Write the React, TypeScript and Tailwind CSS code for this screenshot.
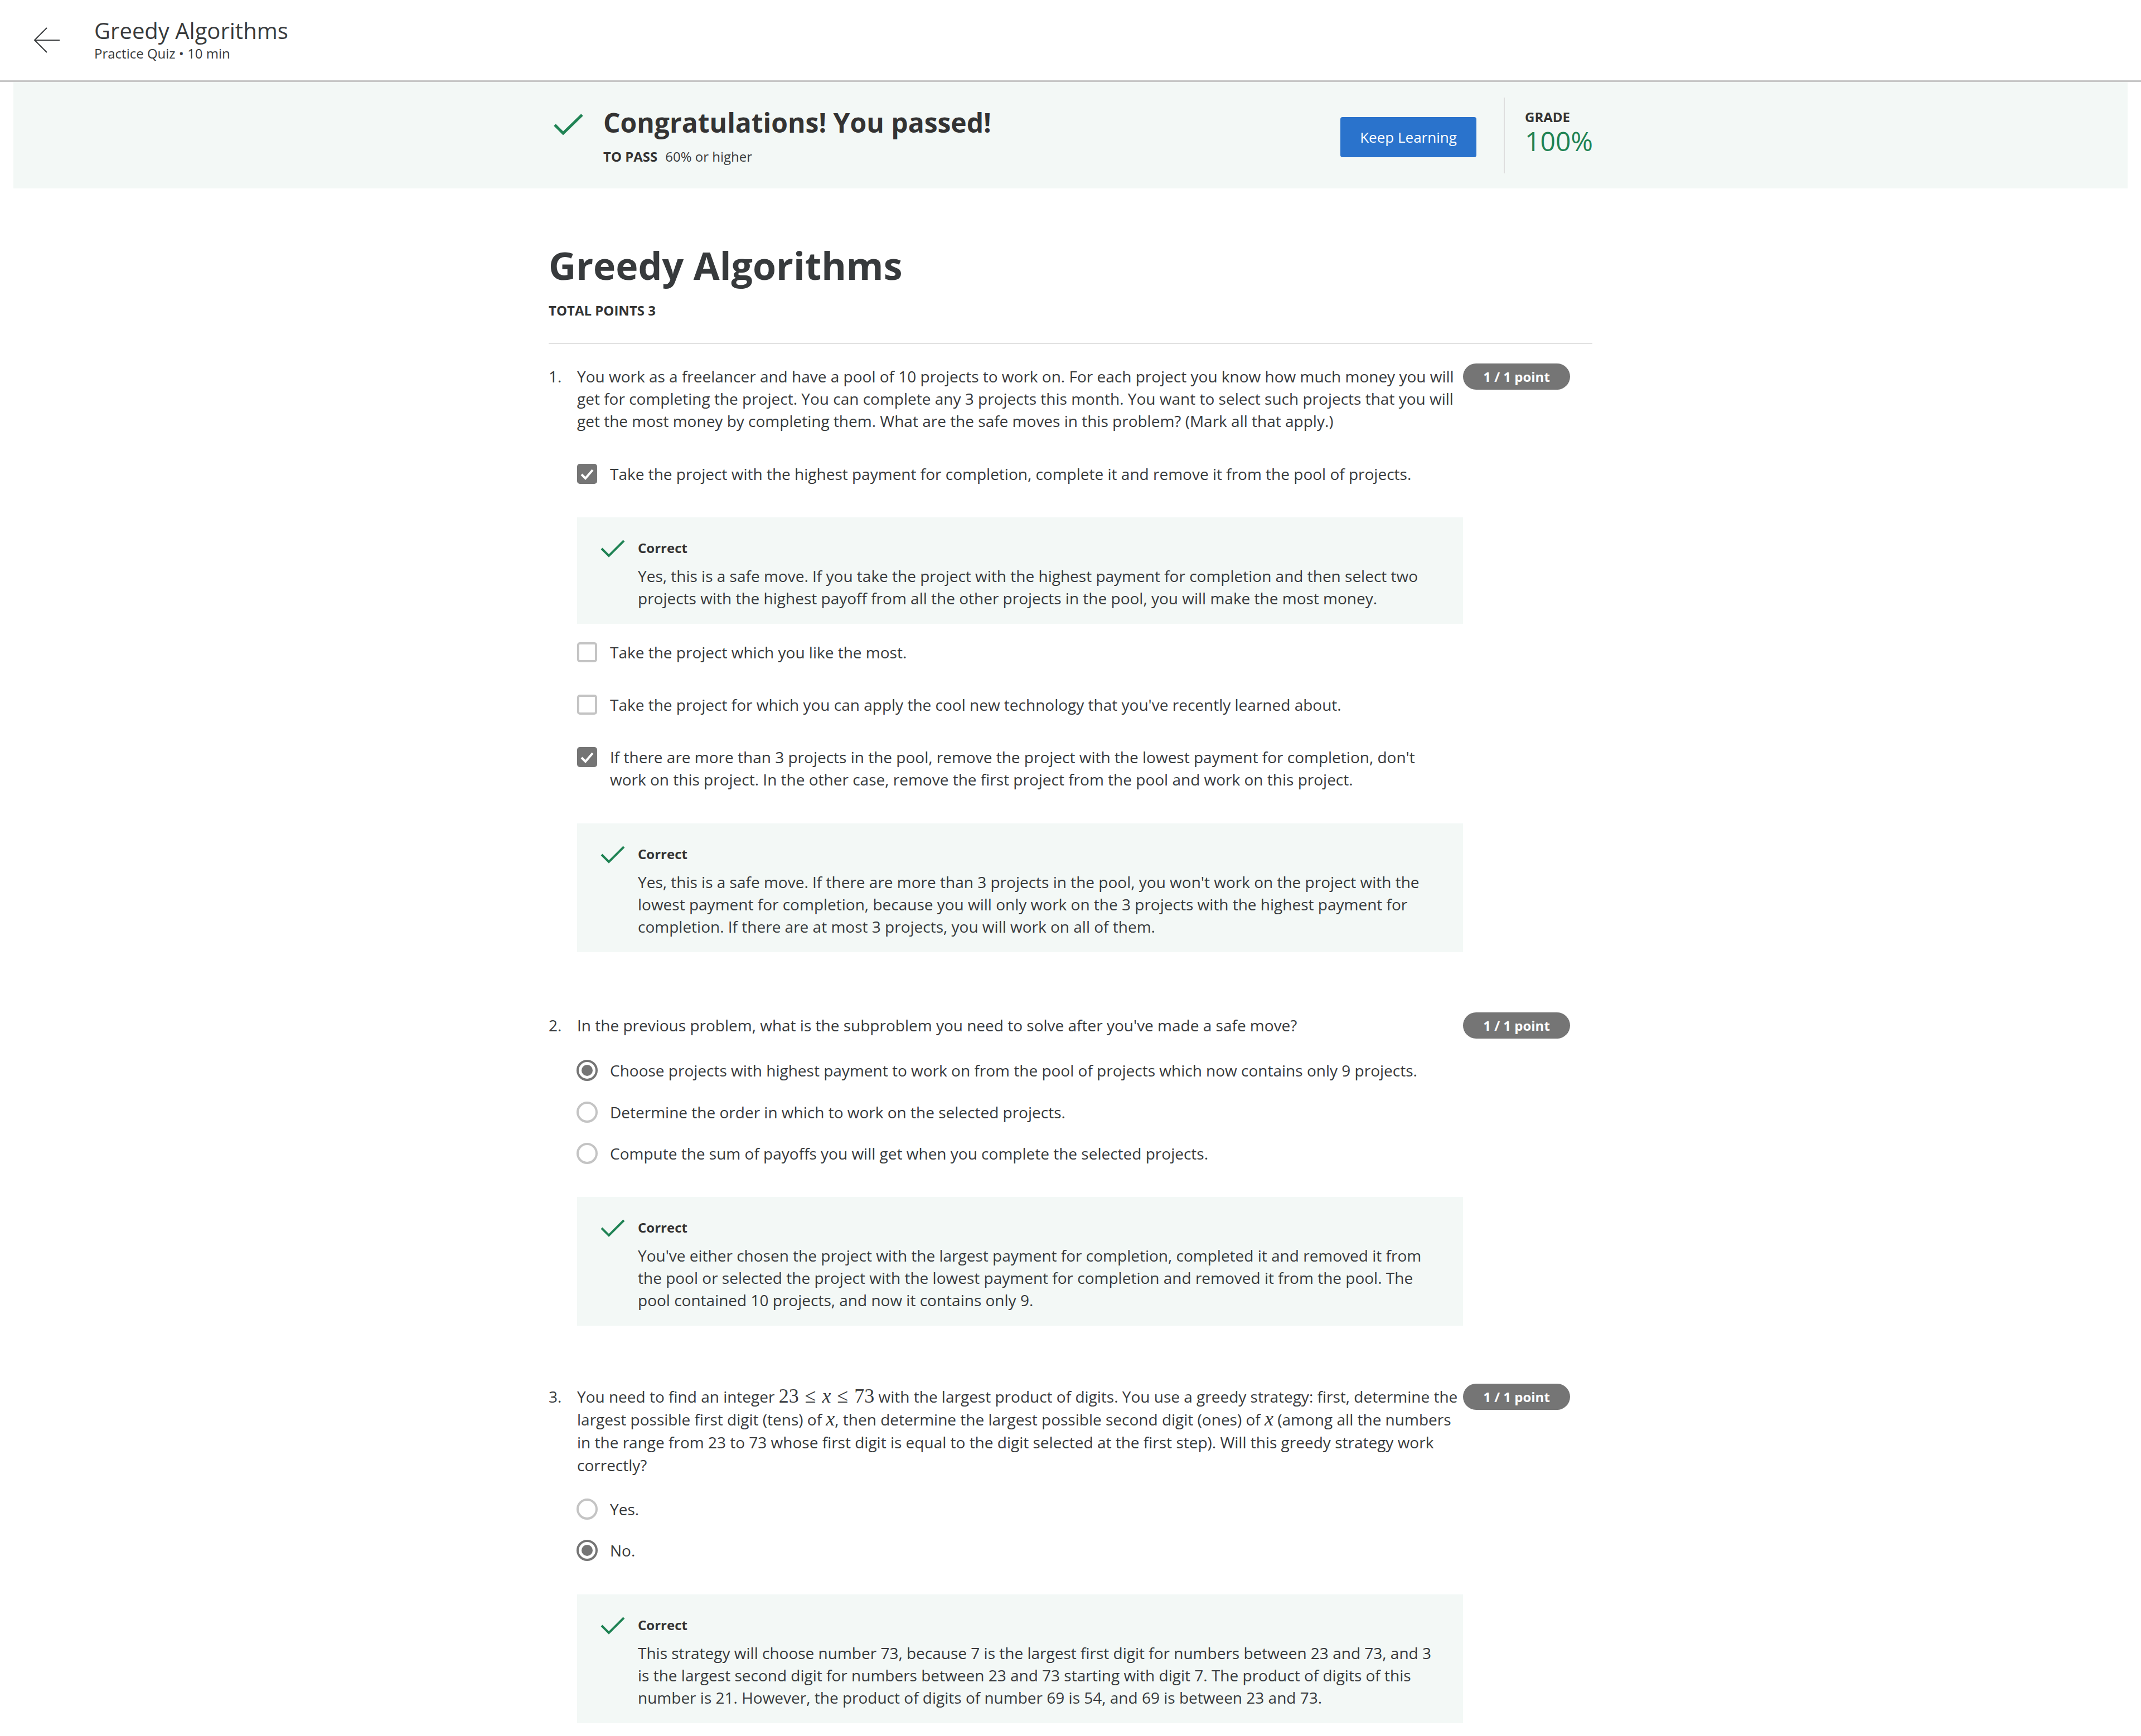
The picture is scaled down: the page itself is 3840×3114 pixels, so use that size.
import React from "react";

const BannerCheck = () => (
  <svg width="53" height="40" viewBox="0 0 53 40">
    <polyline points="2,21 17,36 51,3" fill="none" stroke="#1f8354" strokeWidth="5" />
  </svg>
);

const FbCheck = () => (
  <svg width="44" height="32" viewBox="0 0 44 32">
    <polyline points="2,16 15,29 42,2" fill="none" stroke="#1f8354" strokeWidth="4" />
  </svg>
);

const Checkbox = ({ checked }: { checked: boolean }) =>
  checked ? (
    <div className="w-[36px] h-[36px] rounded-[5px] bg-[#757575] flex items-center justify-center shrink-0">
      <svg width="36" height="36" viewBox="0 0 36 36">
        <polyline points="8,19 15,26 28,11" fill="none" stroke="#ffffff" strokeWidth="4" />
      </svg>
    </div>
  ) : (
    <div className="w-[36px] h-[36px] rounded-[5px] border-[4px] border-[#c4c4c4] bg-white shrink-0" />
  );

const Radio = ({ checked }: { checked: boolean }) =>
  checked ? (
    <div className="w-[38px] h-[38px] rounded-full border-[4px] border-[#757575] bg-white flex items-center justify-center shrink-0">
      <div className="w-[20px] h-[20px] rounded-full bg-[#757575]" />
    </div>
  ) : (
    <div className="w-[38px] h-[38px] rounded-full border-[4px] border-[#c4c4c4] bg-white shrink-0" />
  );

const Option = ({
  kind,
  checked,
  className,
  children,
}: {
  kind: "check" | "radio";
  checked: boolean;
  className: string;
  children: React.ReactNode;
}) => (
  <div className={"flex items-start pr-[40px] " + className}>
    <div className="w-[36px] h-[40px] flex items-center justify-center shrink-0">
      {kind === "check" ? <Checkbox checked={checked} /> : <Radio checked={checked} />}
    </div>
    <div className="ml-[23px] leading-[40px]">{children}</div>
  </div>
);

const Feedback = ({ className, children }: { className: string; children: React.ReactNode }) => (
  <div className={"bg-[#f3f8f6] flex pt-[40px] pb-[26px] " + className}>
    <div className="ml-[42px] w-[44px] shrink-0 flex">
      <FbCheck />
    </div>
    <div className="ml-[23px] pr-[40px] flex-1">
      <div className="text-[24px] font-bold leading-[30px] text-[#333333]">Correct</div>
      <div className="mt-[15px] leading-[40px]">{children}</div>
    </div>
  </div>
);

const Badge = () => (
  <div className="w-[192px] h-[47px] -mt-[3px] shrink-0 rounded-full bg-[#757575] text-white font-bold text-[24px] flex items-center justify-center">
    1 / 1 point
  </div>
);

const M = ({ children }: { children: React.ReactNode }) => (
  <span className="font-['Liberation_Serif',serif] text-[36px] leading-none">{children}</span>
);
const X = () => (
  <M>
    <i>x</i>
  </M>
);

const Question = ({
  num,
  className,
  textClass,
  text,
  children,
}: {
  num: string;
  className: string;
  textClass?: string;
  text: React.ReactNode;
  children: React.ReactNode;
}) => (
  <div className={"flex " + className}>
    <div className={"w-[51px] shrink-0 " + (textClass ?? "leading-[40px]")}>{num}</div>
    <div className="w-[1589px] shrink-0">
      <p className={textClass ?? "leading-[40px]"}>{text}</p>
      {children}
    </div>
    <Badge />
  </div>
);

export default function App() {
  return (
    <div className="min-h-[3114px] bg-white font-['Open_Sans',sans-serif] text-[28px] text-[#373a3c]">
      <header className="h-[147px] border-b-[3px] border-[#c6c6c6] flex items-center">
        <div className="pl-[60px] flex items-center">
          <svg width="48" height="48" viewBox="0 0 48 48">
            <path d="M47 24 H2 M24 2 L2 24 L24 46" fill="none" stroke="#373a3c" strokeWidth="2" />
          </svg>
        </div>
        <div className="ml-[61px] -mt-[3px]">
          <div className="text-[40px] leading-[50px] text-[#373a3c]">Greedy Algorithms</div>
          <div className="mt-[1px] text-[24px] leading-[30px] text-[#373a3c]">Practice Quiz • 10 min</div>
        </div>
      </header>

      <div className="mx-[24px] h-[191px] bg-[#f3f8f6] flex items-center">
        <div className="w-[1872px] mx-auto flex items-center">
          <div className="flex items-start">
            <div className="pl-[9px] pt-[14px] flex">
              <BannerCheck />
            </div>
            <div className="ml-[36px] mt-[3px]">
              <div className="text-[48px] font-bold leading-[56px] text-[#333333]">Congratulations! You passed!</div>
              <div className="mt-[18px] leading-[30px] text-[24px] flex">
                <span className="font-bold text-[#333333]">TO PASS</span>
                <span className="ml-[14px]">60% or higher</span>
              </div>
            </div>
          </div>
          <div className="ml-auto flex items-center">
            <div className="mt-[7px] w-[244px] h-[72px] rounded-[4px] bg-[#2a73cc] text-white text-[26px] flex items-center justify-center">
              Keep Learning
            </div>
            <div className="ml-[49px] w-[2px] h-[136px] bg-[#dedede]" />
            <div className="ml-[36px] w-[121px] mb-[10px]">
              <div className="text-[24px] font-bold leading-[30px] text-[#333333]">GRADE</div>
              <div className="text-[48px] leading-[56px] text-[#1f8354]">100%</div>
            </div>
          </div>
        </div>
      </div>

      <main className="w-[1872px] mx-auto pt-[98px] pb-[23px]">
        <h1 className="text-[68px] font-bold leading-[80px] text-[#373a3c]">Greedy Algorithms</h1>
        <div className="mt-[26px] text-[24px] font-bold leading-[30px] text-[#333333]">TOTAL POINTS 3</div>
        <div className="mt-[43px] h-[2px] bg-[#e1e1e1]" />

        <Question
          num="1."
          className="mt-[38px]"
          text="You work as a freelancer and have a pool of 10 projects to work on. For each project you know how much money you will get for completing the project. You can complete any 3 projects this month. You want to select such projects that you will get the most money by completing them. What are the safe moves in this problem? (Mark all that apply.)"
        >
          <Option kind="check" checked className="mt-[55px]">
            Take the project with the highest payment for completion, complete it and remove it from the pool of projects.
          </Option>
          <Feedback className="mt-[58px]">
            Yes, this is a safe move. If you take the project with the highest payment for completion and then select two projects with the highest payoff from all the other projects in the pool, you will make the most money.
          </Feedback>
          <Option kind="check" checked={false} className="mt-[31px]">
            Take the project which you like the most.
          </Option>
          <Option kind="check" checked={false} className="mt-[54px]">
            Take the project for which you can apply the cool new technology that you've recently learned about.
          </Option>
          <Option kind="check" checked className="mt-[54px]">
            If there are more than 3 projects in the pool, remove the project with the lowest payment for completion, don't work on this project. In the other case, remove the first project from the pool and work on this project.
          </Option>
          <Feedback className="mt-[59px]">
            Yes, this is a safe move. If there are more than 3 projects in the pool, you won't work on the project with the lowest payment for completion, because you will only work on the 3 projects with the highest payment for completion. If there are at most 3 projects, you will work on all of them.
          </Feedback>
        </Question>

        <Question
          num="2."
          className="mt-[111px]"
          text="In the previous problem, what is the subproblem you need to solve after you've made a safe move?"
        >
          <Option kind="radio" checked className="mt-[41px]">
            Choose projects with highest payment to work on from the pool of projects which now contains only 9 projects.
          </Option>
          <Option kind="radio" checked={false} className="mt-[35px]">
            Determine the order in which to work on the selected projects.
          </Option>
          <Option kind="radio" checked={false} className="mt-[34px]">
            Compute the sum of payoffs you will get when you complete the selected projects.
          </Option>
          <Feedback className="mt-[58px]">
            You've either chosen the project with the largest payment for completion, completed it and removed it from the pool or selected the project with the lowest payment for completion and removed it from the pool. The pool contained 10 projects, and now it contains only 9.
          </Feedback>
        </Question>

        <Question
          num="3."
          className="mt-[107px]"
          textClass="leading-[41px]"
          text={
            <>
              You need to find an integer{" "}
              <M>
                23<span className="mx-[11px]">≤</span>
                <i>x</i>
                <span className="mx-[11px]">≤</span>73
              </M>{" "}
              with the largest product of digits. You use a greedy strategy: first, determine the largest possible first digit (tens) of <X />, then determine the largest possible second digit (ones) of <X /> (among all the numbers in the range from 23 to 73 whose first digit is equal to the digit selected at the first step). Will this greedy strategy work correctly?
            </>
          }
        >
          <Option kind="radio" checked={false} className="mt-[38px]">
            Yes.
          </Option>
          <Option kind="radio" checked className="mt-[34px]">
            No.
          </Option>
          <Feedback className="mt-[59px]">
            This strategy will choose number 73, because 7 is the largest first digit for numbers between 23 and 73, and 3 is the largest second digit for numbers between 23 and 73 starting with digit 7. The product of digits of this number is 21. However, the product of digits of number 69 is 54, and 69 is between 23 and 73.
          </Feedback>
        </Question>
      </main>
    </div>
  );
}
